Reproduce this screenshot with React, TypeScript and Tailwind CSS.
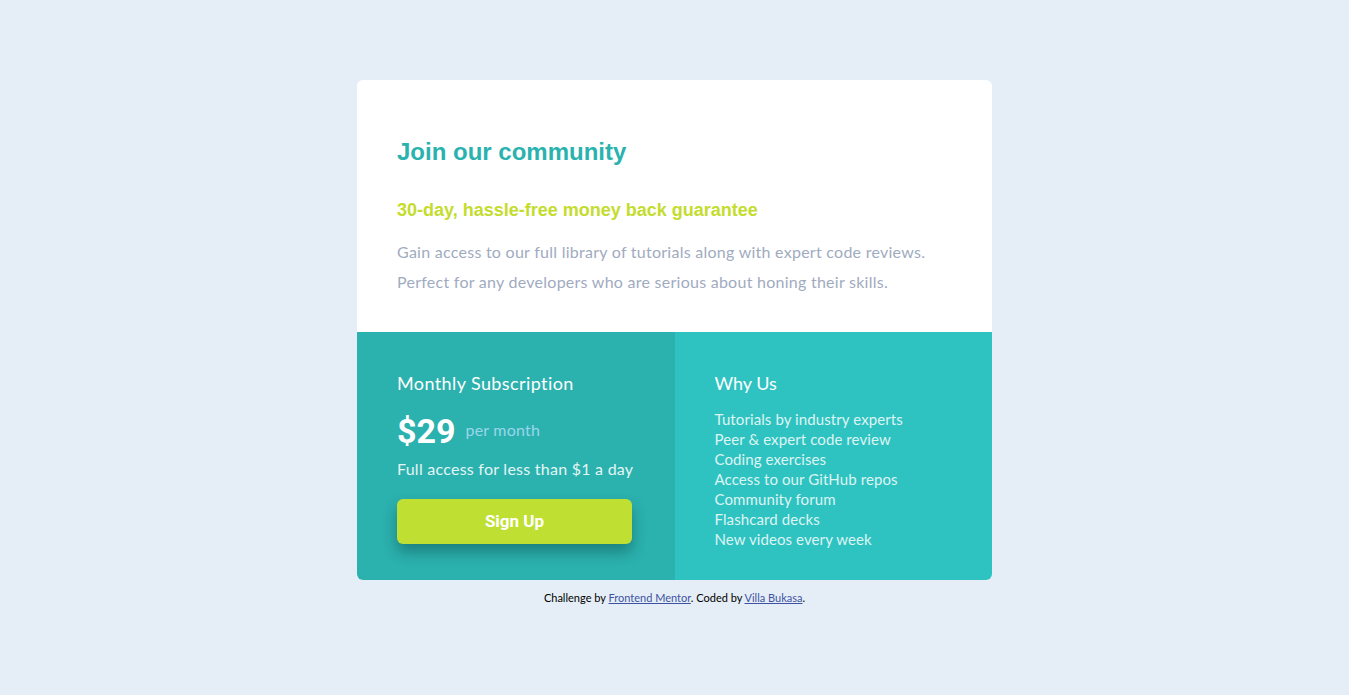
import React from 'react';

const features = [
  'Tutorials by industry experts',
  'Peer & expert code review',
  'Coding exercises',
  'Access to our GitHub repos',
  'Community forum',
  'Flashcard decks',
  'New videos every week',
];

export default function App() {
  return (
    <div className="min-h-[695px] bg-[#e5eef6] pt-[80px] font-['Lato',sans-serif]">
      <div className="mx-auto w-[635px] rounded-[6px] overflow-hidden bg-white">
        {/* Top */}
        <div className="px-[40px] pt-[56px] pb-[35px]">
          <h1 className="font-['Liberation_Sans',Arial,sans-serif] text-[24px] font-bold leading-[32px] text-[#2ab2af]">
            Join our community
          </h1>
          <h2 className="mt-[30px] font-['Liberation_Sans',Arial,sans-serif] text-[18px] font-bold leading-[24px] text-[#c3dc2d]">
            30-day, hassle-free money back guarantee
          </h2>
          <p className="mt-[15px] text-[16px] leading-[30px] tracking-[0.26px] text-[#9fabc0]">
            Gain access to our full library of tutorials along with expert code reviews.
            <br />
            Perfect for any developers who are serious about honing their skills.
          </p>
        </div>

        {/* Bottom */}
        <div className="grid grid-cols-2 h-[248px]">
          <div className="bg-[#2bb1ae] px-[40px] pt-[39px]">
            <h3 className="text-[18px] leading-[24px] tracking-[0.4px] text-white">Monthly Subscription</h3>
            <div className="mt-[14px] flex items-center gap-[10px]">
              <span className="font-['Roboto',sans-serif] text-[34px] font-bold leading-[44px] text-white">$29</span>
              <span className="-mt-[3px] text-[16px] tracking-[0.2px] text-[#9ad7ea]">per month</span>
            </div>
            <p className="mt-[4px] whitespace-nowrap text-[16px] leading-[24px] tracking-[0.25px] text-[#e3f6f5]">Full access for less than $1 a day</p>
            <button className="mt-[18px] h-[45px] w-[235px] rounded-[6px] bg-[#bfe033] font-['Roboto',sans-serif] text-[17px] font-bold text-white shadow-[0_8px_14px_rgba(0,40,40,0.35)]">
              Sign Up
            </button>
          </div>
          <div className="bg-[#2ec3c1] px-[40px] pt-[39px]">
            <h3 className="text-[18px] leading-[24px] text-white">Why Us</h3>
            <ul className="mt-[14px]">
              {features.map((f) => (
                <li key={f} className="text-[15px] leading-[20px] tracking-[0.1px] text-[#def4f3]">
                  {f}
                </li>
              ))}
            </ul>
          </div>
        </div>
      </div>

      <p className="mt-[11px] text-center text-[11px] leading-[14px] text-black">
        Challenge by{' '}
        <a href="#" className="text-[#3e52a3] underline">Frontend Mentor</a>. Coded by{' '}
        <a href="#" className="text-[#3e52a3] underline">Villa Bukasa</a>.
      </p>
    </div>
  );
}
